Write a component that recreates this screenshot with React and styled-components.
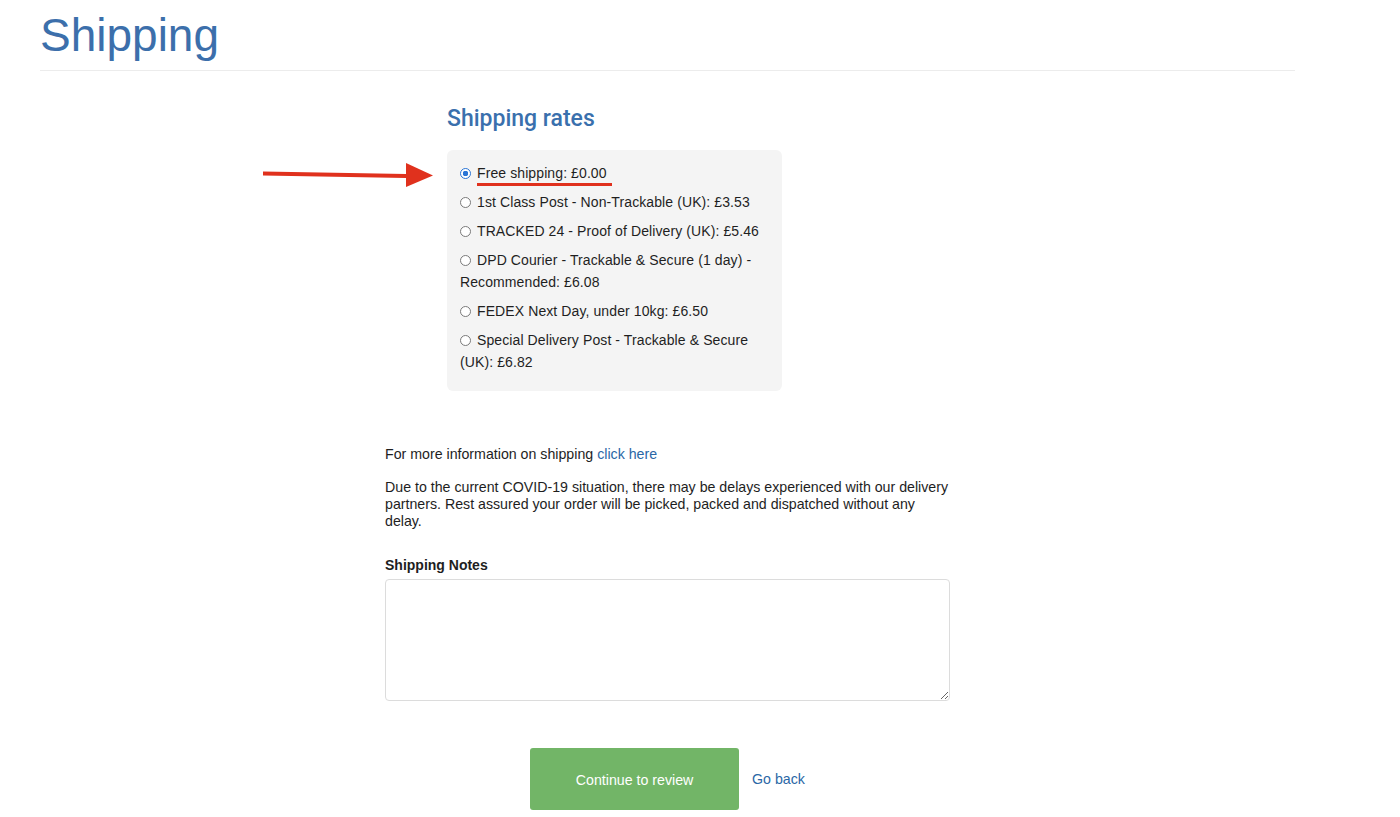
import styled, { createGlobalStyle } from "styled-components";

const GlobalStyle = createGlobalStyle`
  body {
    margin: 0;
    background: #fff;
    font-family: "Liberation Sans", Arial, sans-serif;
    color: #1e1e1e;
  }
`;

const Page = styled.div`
  width: 1255px;
  margin-left: 40px;
`;

const Title = styled.h1`
  margin: 0;
  padding: 9px 0 9px;
  font-size: 46px;
  line-height: 52px;
  font-weight: 400;
  color: #3c6fab;
  border-bottom: 1px solid #ececec;
`;

const Column = styled.div`
  width: 565px;
  margin: 0 auto;
`;

const Rates = styled.section`
  position: relative;
  margin-left: 62px;
  margin-top: 34px;
`;

const Subtitle = styled.h2`
  margin: 0 0 17px;
  font-size: 23px;
  line-height: 28px;
  font-weight: 500;
  font-family: "Roboto", "Liberation Sans", sans-serif;
  color: #3a70ad;
`;

const RateBox = styled.div`
  width: 335px;
  box-sizing: border-box;
  padding: 12px 21px 11px 13px;
  background: #f4f4f4;
  border-radius: 6px;
`;

const Option = styled.label`
  display: block;
  position: relative;
  margin-bottom: 7px;
  font-size: 14px;
  line-height: 22px;
  letter-spacing: 0.1px;
  color: #1f1f1f;
`;

const Radio = styled.span`
  display: inline-block;
  box-sizing: border-box;
  width: 11px;
  height: 11px;
  margin: 0 6px 0 0;
  vertical-align: -1px;
  border-radius: 50%;
  border: 1px solid ${(p) => (p.$checked ? "#2a75d6" : "#7a7a7a")};
  background: ${(p) => (p.$checked ? "radial-gradient(circle, #2a75d6 0 2.6px, #fff 3px)" : "#fff")};
`;

const Underline = styled.span`
  position: absolute;
  left: 17px;
  top: 21px;
  width: 135px;
  height: 3px;
  background: #e0311d;
`;

const Arrow = styled.svg`
  position: absolute;
  left: -184px;
  top: 57px;
`;

const Text = styled.p`
  margin: ${(p) => p.$mt} 0 0;
  font-size: 14.2px;
  line-height: 17px;
  color: #1e1e1e;
`;

const Link = styled.a`
  color: #2b67a6;
  text-decoration: none;
  font-size: 14.2px;
`;

const Label = styled.div`
  margin-top: 27px;
  font-size: 14px;
  line-height: 17px;
  font-weight: 700;
  color: #1e1e1e;
`;

const Notes = styled.textarea`
  display: block;
  box-sizing: border-box;
  width: 565px;
  height: 122px;
  margin-top: 5px;
  border: 1px solid #dcdcdc;
  border-radius: 4px;
  font: inherit;
  outline: none;
`;

const Actions = styled.div`
  display: flex;
  align-items: center;
  justify-content: center;
  gap: 13px;
  margin-top: 47px;
`;

const Button = styled.button`
  width: 209px;
  height: 62px;
  border: none;
  border-radius: 3px;
  background: #72b567;
  color: #fff;
  font-family: "Liberation Sans", Arial, sans-serif;
  font-size: 14.2px;
  padding-top: 2px;
`;

const rates = [
  "Free shipping: £0.00",
  "1st Class Post - Non-Trackable (UK): £3.53",
  "TRACKED 24 - Proof of Delivery (UK): £5.46",
  "DPD Courier - Trackable & Secure (1 day) - Recommended: £6.08",
  "FEDEX Next Day, under 10kg: £6.50",
  "Special Delivery Post - Trackable & Secure (UK): £6.82",
];

export default function App() {
  return (
    <>
      <GlobalStyle />
      <Page>
        <Title>Shipping</Title>
        <Column>
          <Rates>
            <Subtitle>Shipping rates</Subtitle>
            <Arrow width="172" height="26" viewBox="0 0 172 26">
              <path d="M0 9.5 L143 12 L143 16 L0 13.5 Z" fill="#e0311d" />
              <path d="M143 1 L170 13.5 L143 25 Z" fill="#e0311d" />
            </Arrow>
            <RateBox>
              {rates.map((r, i) => (
                <Option key={r}>
                  <Radio $checked={i === 0} />
                  {r}
                  {i === 0 && <Underline />}
                </Option>
              ))}
            </RateBox>
          </Rates>
          <Text $mt="55px">
            For more information on shipping <Link href="#">click here</Link>
          </Text>
          <Text $mt="16px">
            Due to the current COVID-19 situation, there may be delays experienced with our delivery partners. Rest
            assured your order will be picked, packed and dispatched without any delay.
          </Text>
          <Label>Shipping Notes</Label>
          <Notes />
          <Actions>
            <Button>Continue to review</Button>
            <Link href="#">Go back</Link>
          </Actions>
        </Column>
      </Page>
    </>
  );
}
